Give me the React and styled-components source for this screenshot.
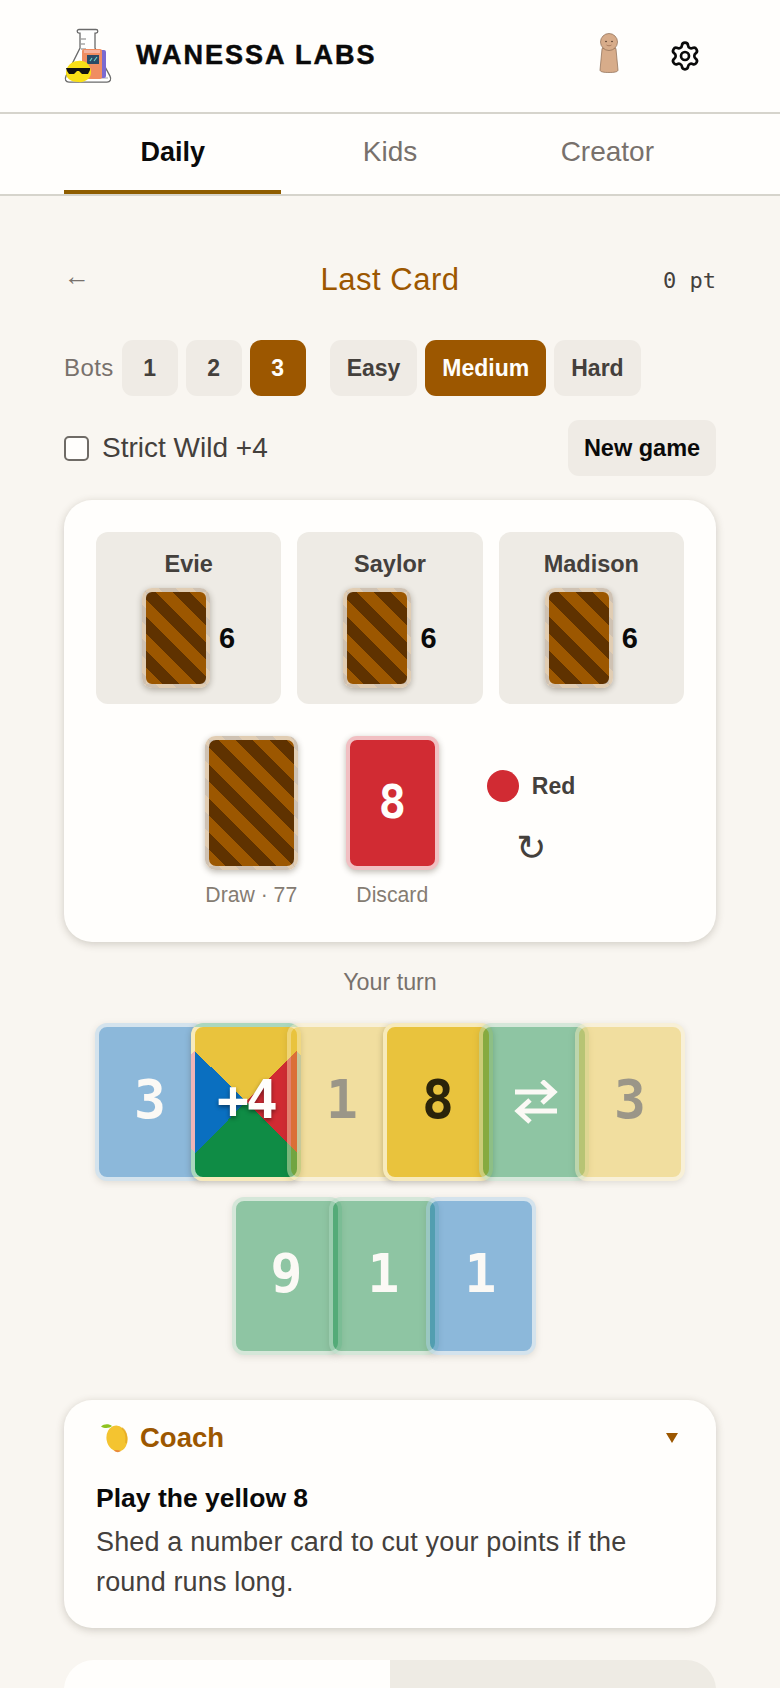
import React from 'react';
import styled, { createGlobalStyle } from 'styled-components';
import { Settings } from 'lucide-react';

const Global = createGlobalStyle`
  html, body { margin: 0; padding: 0; background: #f9f6f1; }
  body { font-family: "Liberation Sans", Arial, sans-serif; color: #44403c; }
  * { box-sizing: border-box; }
`;

const C = { red: '#d12b33', yellow: '#e9c33d', green: '#0f8c45', blue: '#0a6fc0' };
const BACK = 'repeating-linear-gradient(45deg, #9c5700 0 12px, #5f3200 12px 24px)';
const WILD = `conic-gradient(from 315deg, ${C.yellow} 0 25%, ${C.red} 25% 50%, ${C.green} 50% 75%, ${C.blue} 75% 100%)`;

const Page = styled.div`
  width: 780px;
  height: 1688px;
  overflow: hidden;
`;
const Header = styled.header`
  height: 114px;
  padding: 0 64px;
  display: flex;
  align-items: center;
  background: #fffefc;
  border-bottom: 2px solid #d6d4cc;
`;
const Brand = styled.div`
  flex: 1;
  display: flex;
  align-items: center;
  gap: 24px;
`;
const BrandName = styled.span`
  font-size: 27px;
  font-weight: 700;
  letter-spacing: 2px;
  -webkit-text-stroke: 0.5px #0a0a0a;
  color: #0a0a0a;
  margin-top: -2px;
`;
const HeaderIcons = styled.div`
  display: flex;
  align-items: center;
  gap: 50px;
  margin-right: 15px;
`;
const PegSlot = styled.span`
  display: flex;
  margin-bottom: 7px;
`;
const Tabs = styled.nav`
  height: 82px;
  padding: 0 64px;
  display: grid;
  grid-template-columns: repeat(3, 1fr);
  background: #fffefc;
  border-bottom: 2px solid #d6d4cc;
`;
const Tab = styled.div`
  display: flex;
  align-items: center;
  justify-content: center;
  font-size: ${p => (p.$active ? 27 : 28)}px;
  font-weight: ${p => (p.$active ? 700 : 400)};
  color: ${p => (p.$active ? '#0a0a0a' : '#78716c')};
  border-bottom: 4px solid ${p => (p.$active ? '#8f5d00' : 'transparent')};
`;
const Main = styled.main`
  padding: 60px 64px 0;
`;
const TitleRow = styled.div`
  display: flex;
  align-items: center;
  justify-content: space-between;
  height: 48px;
`;
const Back = styled.span`
  font-size: 26px;
  color: #78716c;
  width: 60px;
  padding-bottom: 8px;
`;
const Title = styled.h1`
  margin: 0;
  font-size: 31px;
  font-weight: 400;
  letter-spacing: 0.5px;
  color: #9c5700;
`;
const Score = styled.span`
  width: 60px;
  text-align: right;
  white-space: nowrap;
  font-family: "DejaVu Sans Mono", monospace;
  font-size: 22px;
  color: #44403c;
`;
const Controls = styled.div`
  display: flex;
  align-items: center;
  margin-top: 36px;
`;
const Group = styled.div`
  display: flex;
  align-items: center;
  gap: 8px;
  margin-right: 24px;
`;
const Label = styled.span`
  font-size: 24px;
  letter-spacing: 0.4px;
  color: #78716c;
`;
const Chip = styled.button`
  height: 56px;
  min-width: 56px;
  padding: 0 17px;
  border: 0;
  border-radius: 11px;
  font: 700 23px "Liberation Sans", Arial, sans-serif;
  background: ${p => (p.$active ? '#9c5700' : '#efebe5')};
  color: ${p => (p.$active ? '#fffefc' : '#44403c')};
`;
const OptionRow = styled.div`
  display: flex;
  align-items: center;
  justify-content: space-between;
  margin-top: 24px;
`;
const Check = styled.label`
  display: flex;
  align-items: center;
  gap: 13px;
  font-size: 28px;
  color: #44403c;
`;
const Box = styled.span`
  width: 25px;
  height: 25px;
  background: #fffefc;
  border: 2px solid #6f6b66;
  border-radius: 5px;
`;
const NewGame = styled.button`
  height: 56px;
  width: 148px;
  border: 0;
  border-radius: 11px;
  background: #efebe5;
  color: #0a0a0a;
  font: 700 23.500px "Liberation Sans", Arial, sans-serif;
`;
const Panel = styled.section`
  background: #fffefc;
  border-radius: 28px;
  box-shadow: 0 2px 8px rgba(60, 50, 30, 0.22);
`;
const Table = styled(Panel)`
  margin-top: 24px;
  height: 442px;
  padding: 32px;
`;
const Opponents = styled.div`
  display: grid;
  grid-template-columns: repeat(3, 1fr);
  gap: 16px;
`;
const Opponent = styled.div`
  height: 172px;
  padding-top: 19px;
  background: #eeebe5;
  border-radius: 12px;
  text-align: center;
`;
const OppName = styled.div`
  font-size: 23.500px;
  font-weight: 700;
  line-height: 26px;
  color: #44403c;
`;
const OppHand = styled.div`
  margin-top: 11px;
  display: flex;
  align-items: center;
  justify-content: center;
  gap: 9px;
`;
const Count = styled.span`
  font-size: 29px;
  font-weight: 700;
  color: #0a0a0a;
`;
const MiniBack = styled.div`
  width: 68px;
  height: 100px;
  border: 4px solid rgba(255, 255, 255, 0.7);
  border-radius: 10px;
  background: ${BACK};
  box-shadow: 0 2px 6px rgba(40, 30, 10, 0.3);
`;
const Piles = styled.div`
  margin-top: 32px;
  display: flex;
  justify-content: center;
  gap: 48px;
`;
const Pile = styled.div`
  width: 93px;
  display: flex;
  flex-direction: column;
  align-items: center;
`;
const PileCard = styled.div`
  width: 93px;
  height: 134px;
  padding-bottom: 2px;
  border: 4px solid rgba(255, 255, 255, 0.7);
  border-radius: 11px;
  background: ${p => p.$bg};
  box-shadow: 0 2px 6px rgba(40, 30, 10, 0.3);
  display: flex;
  align-items: center;
  justify-content: center;
  color: #fffefc;
  font: 700 46px "DejaVu Sans Mono", monospace;
`;
const PileLabel = styled.div`
  margin-top: 12px;
  font-size: 21.200px;
  line-height: 26px;
  white-space: nowrap;
  color: #857c72;
`;
const Status = styled.div`
  display: flex;
  flex-direction: column;
  align-items: center;
  padding-top: 34px;
  gap: 25px;
`;
const ColorTag = styled.div`
  display: flex;
  align-items: center;
  gap: 13px;
  font-size: 23px;
  font-weight: 700;
  color: #44403c;
`;
const Dot = styled.span`
  width: 32px;
  height: 32px;
  border-radius: 50%;
  background: ${C.red};
`;
const Direction = styled.span`
  font-family: "DejaVu Sans", sans-serif;
  font-size: 36px;
  line-height: 42px;
  color: #44403c;
`;
const Turn = styled.div`
  margin-top: 27px;
  text-align: center;
  font-size: 23.300px;
  line-height: 26px;
  color: #78716c;
`;
const Hand = styled.div`
  margin-top: 28px;
  display: flex;
  flex-wrap: wrap;
  justify-content: center;
  row-gap: 8px;
`;
const Card = styled.div`
  position: relative;
  width: 110px;
  height: 158px;
  margin-left: ${p => (p.$loose ? -13 : -14)}px;
  padding-bottom: ${p => (p.$icon ? 0 : 6)}px;
  padding-left: ${p => (p.$icon ? 3 : 0)}px;
  &:first-child { margin-left: 0; }
  border: 4px solid rgba(255, 255, 255, 0.65);
  border-radius: 12px;
  background: ${p => p.$bg};
  opacity: ${p => (p.$dim ? 0.45 : 1)};
  box-shadow: 0 2px 6px rgba(40, 30, 10, 0.25);
  display: flex;
  align-items: center;
  justify-content: center;
  color: ${p => (p.$dark ? '#2b240a' : '#fffefc')};
  text-shadow: ${p => (p.$wild ? '0 2px 4px rgba(0,0,0,.45)' : 'none')};
  font: 700 53px "DejaVu Sans Mono", monospace;
  letter-spacing: ${p => (p.$wild ? '-3px' : '0')};
`;
const Coach = styled(Panel)`
  margin-top: 45px;
  height: 228px;
  padding: 20px 32px;
`;
const CoachHead = styled.div`
  display: flex;
  align-items: center;
  gap: 10px;
  height: 36px;
  font-size: 27.500px;
  font-weight: 700;
  color: #9c5700;
`;
const LemonSlot = styled.span`
  display: flex;
  margin-left: 4px;
`;
const Caret = styled.span`
  margin-left: auto;
  margin-right: 6px;
  width: 0;
  height: 0;
  border-left: 6px solid transparent;
  border-right: 6px solid transparent;
  border-top: 10px solid #9c5700;
`;
const Tip = styled.div`
  margin-top: 26px;
  font-size: 26.500px;
  font-weight: 700;
  line-height: 32px;
  color: #0a0a0a;
`;
const TipBody = styled.p`
  margin: 8px 0 0;
  max-width: 560px;
  font-size: 27px;
  letter-spacing: 0.15px;
  line-height: 40px;
  color: #44403c;
`;
const Segments = styled.div`
  margin-top: 32px;
  height: 90px;
  display: grid;
  grid-template-columns: 1fr 1fr;
  border-radius: 30px 30px 0 0;
  overflow: hidden;
`;
const Segment = styled.div`
  background: ${p => (p.$active ? '#fffefc' : '#eeebe4')};
`;
const RowBreak = styled.div`
  flex-basis: 100%;
  height: 0;
`;

const Logo = () => (
  <svg width="48" height="56" viewBox="0 0 48 56">
    <path d="M15 1.500h17a1.600 1.600 0 0 1 0 3.600h-1v15l15 28c1.600 3.400.2 6-3 6H5c-3.200 0-4.600-2.600-3-6l14-28v-15h-1a1.600 1.600 0 0 1 0-3.600z" fill="#fff" stroke="#6b6b6b" strokeWidth="1.300" />
    <path d="M17 11h5M17 16h4M17 21h5" stroke="#a8a8a8" strokeWidth="1.400" />
    <path d="M6 50h38" stroke="#c4c4c4" strokeWidth="1.500" />
    <rect x="33" y="22" width="9" height="28" rx="2" fill="#7a6ad0" />
    <rect x="18" y="21" width="20" height="30" rx="2" fill="#f08d62" />
    <rect x="20" y="22" width="16" height="3" fill="#f5b3a0" />
    <rect x="23" y="27" width="12" height="9" fill="#2a4a66" />
    <path d="M26 33l2-3M30 33l3-4" stroke="#6bd0c8" strokeWidth="1.200" />
    <path d="M2 45c0-6 5-12 12-12 7-1 12 3 13 10 1 7-6 12-13 11C8 54 2 51 2 45z" fill="#f9df17" />
    <path d="M2 40h24v2l-2 4h-6l-3-3h-2l-3 3H5l-2-3z" fill="#111" />
  </svg>
);

const Peg = () => (
  <svg width="20" height="40" viewBox="0 0 20 40">
    <path d="M4 15h12c.6 0 1 .4 1 1l2 21c0 2-4 2.500-9 2.500S1 39 1 37l2-21c0-.6.4-1 1-1z" fill="#d7ac8a" stroke="#8a6a52" strokeWidth=".7" />
    <circle cx="10" cy="9" r="8.500" fill="#d7ac8a" stroke="#8a6a52" strokeWidth=".7" />
    <circle cx="7" cy="8.500" r=".8" fill="#4a3426" />
    <circle cx="13" cy="8.500" r=".8" fill="#4a3426" />
    <path d="M7.500 12c1.500 1 3.500 1 5 0" fill="none" stroke="#8a5a42" strokeWidth=".6" />
  </svg>
);

const Lemon = () => (
  <svg width="30" height="30" viewBox="0 0 30 30">
    <path d="M1 3.500C4 .5 9 .5 12 3c-2 2-7 3-11 .5z" fill="#8fc31f" />
    <ellipse cx="17" cy="15.500" rx="10.500" ry="13" fill="#f4c430" transform="rotate(-10 17 15.500)" />
    <path d="M14 27.500c2 2 5 2.200 7 .5-3-1-5-1.300-7-.5z" fill="#ea8a3a" />
    <path d="M22 5c4 3 5 9 4 15" stroke="#e0a020" strokeWidth="2" fill="none" opacity=".6" />
  </svg>
);

const Swap = () => (
  <svg width="44" height="44" viewBox="0 0 44 44" fill="none" stroke="#fffefc" strokeWidth="5">
    <path d="M1 12h40M28 1l12 11-12 11" />
    <path d="M43 31H3M16 20L4 31l12 11" />
  </svg>
);

const opponents = ['Evie', 'Saylor', 'Madison'];
const hand = [
  { c: 'blue', v: '3', dim: true },
  { wild: true, v: '+4' },
  { c: 'yellow', v: '1', dim: true, dark: true },
  { c: 'yellow', v: '8', dark: true },
  { c: 'green', icon: true, dim: true },
  { c: 'yellow', v: '3', dim: true, dark: true },
  { c: 'green', v: '9', dim: true, brk: true, loose: true },
  { c: 'green', v: '1', dim: true, loose: true },
  { c: 'blue', v: '1', dim: true, loose: true },
];

export default function App() {
  return (
    <Page>
      <Global />
      <Header>
        <Brand>
          <Logo />
          <BrandName>WANESSA LABS</BrandName>
        </Brand>
        <HeaderIcons>
          <PegSlot><Peg /></PegSlot>
          <Settings size={32} color="#0a0a0a" strokeWidth={2} />
        </HeaderIcons>
      </Header>
      <Tabs>
        <Tab $active>Daily</Tab>
        <Tab>Kids</Tab>
        <Tab>Creator</Tab>
      </Tabs>
      <Main>
        <TitleRow>
          <Back>←</Back>
          <Title>Last Card</Title>
          <Score>0 pt</Score>
        </TitleRow>
        <Controls>
          <Group>
            <Label>Bots</Label>
            <Chip>1</Chip>
            <Chip>2</Chip>
            <Chip $active>3</Chip>
          </Group>
          <Group>
            <Chip>Easy</Chip>
            <Chip $active>Medium</Chip>
            <Chip>Hard</Chip>
          </Group>
        </Controls>
        <OptionRow>
          <Check><Box />Strict Wild +4</Check>
          <NewGame>New game</NewGame>
        </OptionRow>
        <Table>
          <Opponents>
            {opponents.map(n => (
              <Opponent key={n}>
                <OppName>{n}</OppName>
                <OppHand><MiniBack /><Count>6</Count></OppHand>
              </Opponent>
            ))}
          </Opponents>
          <Piles>
            <Pile>
              <PileCard $bg={BACK} />
              <PileLabel>Draw · 77</PileLabel>
            </Pile>
            <Pile>
              <PileCard $bg={C.red}>8</PileCard>
              <PileLabel>Discard</PileLabel>
            </Pile>
            <Status>
              <ColorTag><Dot />Red</ColorTag>
              <Direction>↻</Direction>
            </Status>
          </Piles>
        </Table>
        <Turn>Your turn</Turn>
        <Hand>
          {hand.map((k, i) => (
            <React.Fragment key={i}>
              {k.brk && <RowBreak />}
              <Card $bg={k.wild ? WILD : C[k.c]} $dim={k.dim} $dark={k.dark} $wild={k.wild} $icon={k.icon} $loose={k.loose}>
                {k.icon ? <Swap /> : k.v}
              </Card>
            </React.Fragment>
          ))}
        </Hand>
        <Coach>
          <CoachHead><LemonSlot><Lemon /></LemonSlot>Coach<Caret /></CoachHead>
          <Tip>Play the yellow 8</Tip>
          <TipBody>Shed a number card to cut your points if the round runs long.</TipBody>
        </Coach>
        <Segments>
          <Segment $active />
          <Segment />
        </Segments>
      </Main>
    </Page>
  );
}
